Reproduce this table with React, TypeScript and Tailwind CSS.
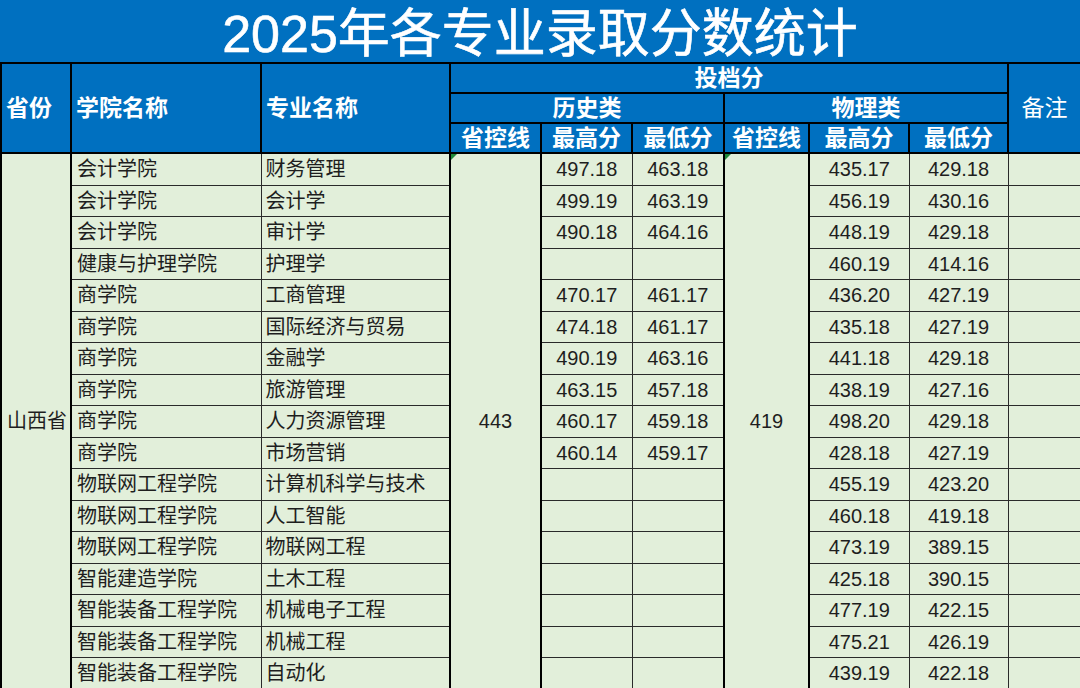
import React from "react";

interface Row {
  college: string;
  major: string;
  histHigh?: string;
  histLow?: string;
  phyHigh: string;
  phyLow: string;
}

const rows: Row[] = [
  { college: "会计学院", major: "财务管理", histHigh: "497.18", histLow: "463.18", phyHigh: "435.17", phyLow: "429.18" },
  { college: "会计学院", major: "会计学", histHigh: "499.19", histLow: "463.19", phyHigh: "456.19", phyLow: "430.16" },
  { college: "会计学院", major: "审计学", histHigh: "490.18", histLow: "464.16", phyHigh: "448.19", phyLow: "429.18" },
  { college: "健康与护理学院", major: "护理学", phyHigh: "460.19", phyLow: "414.16" },
  { college: "商学院", major: "工商管理", histHigh: "470.17", histLow: "461.17", phyHigh: "436.20", phyLow: "427.19" },
  { college: "商学院", major: "国际经济与贸易", histHigh: "474.18", histLow: "461.17", phyHigh: "435.18", phyLow: "427.19" },
  { college: "商学院", major: "金融学", histHigh: "490.19", histLow: "463.16", phyHigh: "441.18", phyLow: "429.18" },
  { college: "商学院", major: "旅游管理", histHigh: "463.15", histLow: "457.18", phyHigh: "438.19", phyLow: "427.16" },
  { college: "商学院", major: "人力资源管理", histHigh: "460.17", histLow: "459.18", phyHigh: "498.20", phyLow: "429.18" },
  { college: "商学院", major: "市场营销", histHigh: "460.14", histLow: "459.17", phyHigh: "428.18", phyLow: "427.19" },
  { college: "物联网工程学院", major: "计算机科学与技术", phyHigh: "455.19", phyLow: "423.20" },
  { college: "物联网工程学院", major: "人工智能", phyHigh: "460.18", phyLow: "419.18" },
  { college: "物联网工程学院", major: "物联网工程", phyHigh: "473.19", phyLow: "389.15" },
  { college: "智能建造学院", major: "土木工程", phyHigh: "425.18", phyLow: "390.15" },
  { college: "智能装备工程学院", major: "机械电子工程", phyHigh: "477.19", phyLow: "422.15" },
  { college: "智能装备工程学院", major: "机械工程", phyHigh: "475.21", phyLow: "426.19" },
  { college: "智能装备工程学院", major: "自动化", phyHigh: "439.19", phyLow: "422.18" },
];

const th = "border-2 border-black bg-[#0070C0] text-white text-[23px] font-bold leading-none";
const td = "border border-[#2a2a2a] text-[20px] leading-none text-[#1e1e1e]";

// green excel "error" marker in the corner of a merged cell
const Marker = () => (
  <span className="absolute left-0 top-0 h-0 w-0 border-t-[6px] border-r-[6px] border-t-[#1f8a3a] border-r-transparent" />
);

export default function App() {
  return (
    <div
      className="w-[1080px] h-[688px] overflow-hidden bg-[#E2EFDA]"
      style={{ fontFamily: '"Liberation Sans", "Noto Sans CJK SC", sans-serif' }}
    >
      <div className="h-[62px] bg-[#0070C0] flex items-center justify-center text-white text-[52px] leading-none pt-[6px] [-webkit-text-stroke:0.6px_white]">
        2025年各专业录取分数统计
      </div>
      <table className="w-[1080px] table-fixed border-collapse">
        <colgroup>
          <col className="w-[70px]" />
          <col className="w-[190px]" />
          <col className="w-[189px]" />
          <col className="w-[91px]" />
          <col className="w-[91px]" />
          <col className="w-[92px]" />
          <col className="w-[85px]" />
          <col className="w-[100px]" />
          <col className="w-[99px]" />
          <col className="w-[73px]" />
        </colgroup>
        <thead>
          <tr className="h-[30px]">
            <th rowSpan={3} className={`${th} text-left pl-[4px]`}>省份</th>
            <th rowSpan={3} className={`${th} text-left pl-[4px]`}>学院名称</th>
            <th rowSpan={3} className={`${th} text-left pl-[4px]`}>专业名称</th>
            <th colSpan={6} className={th}>投档分</th>
            <th rowSpan={3} className={`${th} !font-normal`}>备注</th>
          </tr>
          <tr className="h-[30px]">
            <th colSpan={3} className={th}>历史类</th>
            <th colSpan={3} className={th}>物理类</th>
          </tr>
          <tr className="h-[30px]">
            <th className={th}>省控线</th>
            <th className={th}>最高分</th>
            <th className={th}>最低分</th>
            <th className={th}>省控线</th>
            <th className={th}>最高分</th>
            <th className={th}>最低分</th>
          </tr>
        </thead>
        <tbody>
          {rows.map((r, i) => (
            <tr key={i} className={i % 2 === 0 ? "h-[32px]" : "h-[31px]"}>
              {i === 0 && (
                <td rowSpan={17} className={`${td} border-2 border-black text-left pl-[5px]`}>
                  山西省
                </td>
              )}
              <td className={`${td} pl-[5px]`}>{r.college}</td>
              <td className={`${td} pl-[4px] border-r-2 border-r-black`}>{r.major}</td>
              {i === 0 && (
                <td rowSpan={17} className={`${td} relative border-2 border-black text-center`}>
                  <Marker />
                  443
                </td>
              )}
              <td className={`${td} text-center`}>{r.histHigh}</td>
              <td className={`${td} text-center`}>{r.histLow}</td>
              {i === 0 && (
                <td rowSpan={17} className={`${td} relative border-2 border-black text-center`}>
                  <Marker />
                  419
                </td>
              )}
              <td className={`${td} text-center`}>{r.phyHigh}</td>
              <td className={`${td} text-center`}>{r.phyLow}</td>
              <td className={`${td} border-r-2 border-r-black`}></td>
            </tr>
          ))}
        </tbody>
      </table>
    </div>
  );
}
